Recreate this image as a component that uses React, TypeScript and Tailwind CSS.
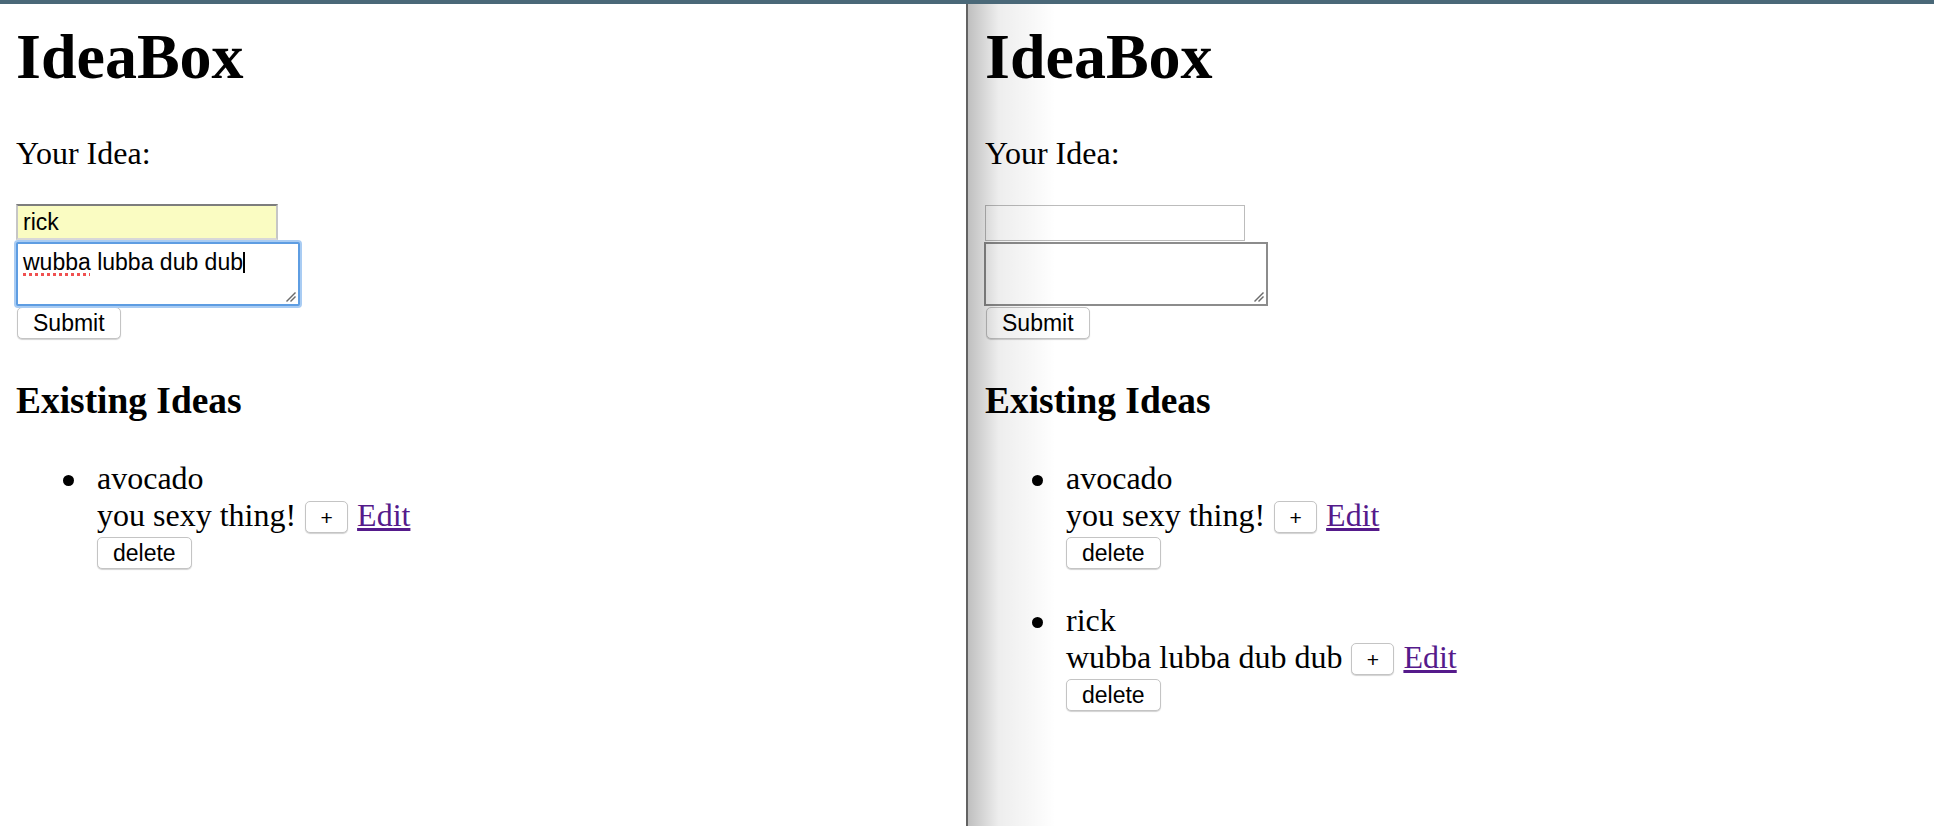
import React from "react";

type Idea = { title: string; body: string };

const serif = "font-['Liberation_Serif',_'Times_New_Roman',_serif]";
const sans = "font-['Liberation_Sans',_Arial,_sans-serif]";

const Grip = () => (
  <svg className="absolute right-[2px] bottom-[2px]" width="12" height="12" viewBox="0 0 12 12">
    <line x1="11.5" y1="2.5" x2="2.5" y2="11.5" stroke="#6b6b6b" strokeWidth="1.4" />
    <line x1="11.5" y1="6.5" x2="6.5" y2="11.5" stroke="#6b6b6b" strokeWidth="1.4" />
  </svg>
);

const Btn = ({ children, className = "" }: { children: React.ReactNode; className?: string }) => (
  <button
    className={`h-[32px] px-[15px] flex items-center justify-center bg-white border border-[#c4c4c4] rounded-[5px] shadow-[0_1px_1px_rgba(0,0,0,0.18)] text-[23px] text-black ${sans} ${className}`}
  >
    {children}
  </button>
);

const IdeaItem = ({ idea, first }: { idea: Idea; first: boolean }) => (
  <li className={`flex ${first ? "" : "mt-[33px]"}`}>
    <span className="w-[11px] h-[11px] mt-[15px] rounded-full bg-black shrink-0" />
    <div className="ml-[23px] flex flex-col">
      <div className="h-[37px] leading-[37px]">{idea.title}</div>
      <div className="h-[37px] flex items-start">
        <span className="leading-[37px] whitespace-nowrap">{idea.body}</span>
        <Btn className="ml-[9px] mt-[4px] w-[43px]">
          <span className="text-[21px] mt-[2px]">+</span>
        </Btn>
        <a href="#" className="ml-[9px] leading-[37px] text-[#551a8b] underline">
          Edit
        </a>
      </div>
      <div className="mt-[3px]">
        <Btn>delete</Btn>
      </div>
    </div>
  </li>
);

const Page = ({ filled, ideas, right }: { filled: boolean; ideas: Idea[]; right: boolean }) => (
  <div className={`${serif} text-black text-[32px] pt-[16px] ${right ? "pl-[17px]" : "pl-[16px]"}`}>
    <h1 className="text-[64px] leading-[74px] font-bold">IdeaBox</h1>
    <div className="mt-[41px] leading-[37px]">Your Idea:</div>

    {filled ? (
      <input
        readOnly
        value="rick"
        className={`block mt-[32px] w-[262px] h-[36px] bg-[#fafcc2] border-2 border-t-[#7d7d7d] border-x-[#c6c6c6] border-b-[#d8d8d8] px-[5px] text-[23px] outline-none ${sans}`}
      />
    ) : (
      <input
        readOnly
        value=""
        className={`block mt-[33px] w-[260px] h-[36px] bg-white border border-[#bcbcbc] px-[5px] text-[23px] outline-none ${sans}`}
      />
    )}

    {filled ? (
      <div
        className={`relative mt-[2px] w-[284px] h-[64px] bg-white border-2 border-[#5e9de2] rounded-[2px] shadow-[0_0_0_2px_#a9ccf3] pl-[5px] pt-[5px] text-[23px] leading-[26px] ${sans}`}
      >
        <span className="underline decoration-dotted decoration-[#f05050] decoration-[3px] underline-offset-[3px]">wubba</span>{" "}
        lubba dub dub
        <span className="inline-block w-[2px] h-[21px] bg-black align-[-3px]" />
        <Grip />
      </div>
    ) : (
      <div className="relative mt-[1px] -ml-px w-[284px] h-[64px] bg-white border-2 border-[#8c8c8c]">
        <Grip />
      </div>
    )}

    <div className="mt-[1px] ml-px">
      <Btn>Submit</Btn>
    </div>

    <h3 className="mt-[40px] text-[37.44px] leading-[43px] font-bold">Existing Ideas</h3>

    <ul className="mt-[38px] pl-[47px]">
      {ideas.map((idea, i) => (
        <IdeaItem key={idea.title} idea={idea} first={i === 0} />
      ))}
    </ul>
  </div>
);

export default function App() {
  const avocado = { title: "avocado", body: "you sexy thing!" };
  const rick = { title: "rick", body: "wubba lubba dub dub" };

  return (
    <div className="h-[826px] w-full flex flex-col overflow-hidden bg-white">
      <div className="h-[4px] bg-[#4a6878] shrink-0" />
      <div className="flex flex-1 min-h-0">
        <div className="w-[966px] shrink-0">
          <Page filled ideas={[avocado]} right={false} />
        </div>
        <div className="w-[2px] bg-[#626262] shrink-0" />
        <div className="relative flex-1">
          <Page filled={false} ideas={[avocado, rick]} right />
          <div className="pointer-events-none absolute left-0 top-0 bottom-0 w-[88px] bg-linear-to-r from-black/25 via-black/[0.07] via-35% to-transparent" />
        </div>
      </div>
    </div>
  );
}
